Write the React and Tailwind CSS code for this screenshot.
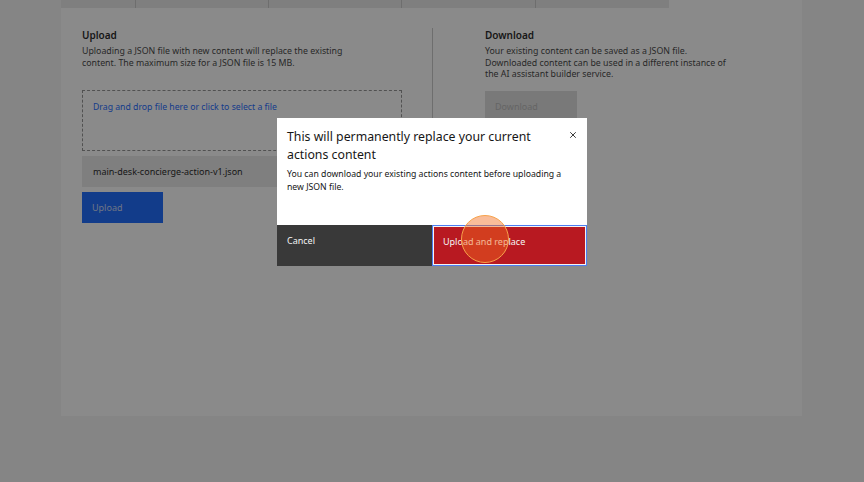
import { X } from 'lucide-react'

const tabs = [75, 133, 133, 134, 133]

export default function App() {
  return (
    <div className="relative h-[482px] w-[864px] overflow-hidden bg-[#f4f4f4] font-['Noto_Sans',sans-serif]">
      {/* page card */}
      <div className="ml-[61px] h-[416px] w-[741px] bg-white">
        <div className="flex h-[8px] w-[608px] bg-[#e8e8e8]">
          {tabs.map((w, i) => (
            <div key={i} style={{ width: w }} className={i < tabs.length - 1 ? 'h-full border-r border-[#c6c6c6]' : 'h-full'} />
          ))}
        </div>

        <div className="flex pl-[21px] pt-[20px]">
          {/* upload column */}
          <div className="w-[320px]">
            <h2 className="text-[10px] font-semibold leading-[14px] text-[#161616]">Upload</h2>
            <p className="mt-[4px] w-[280px] text-[8.8px] leading-[11.5px] text-[#393939]">
              Uploading a JSON file with new content will replace the existing content. The maximum size for a JSON file is 15 MB.
            </p>
            <div className="mt-[21px] h-[61px] border border-dashed border-[#8d8d8d] px-[10px] pt-[10px]">
              <p className="text-[8.7px] leading-[12px] text-[#0f62fe]">Drag and drop file here or click to select a file</p>
            </div>
            <div className="mt-[5px] flex h-[31px] items-center bg-[#e8e8e8] px-[11px]">
              <span className="text-[9px] text-[#161616]">main-desk-concierge-action-v1.json</span>
            </div>
            <button className="mt-[5px] flex h-[31px] w-[81px] items-center bg-[#0f62fe] px-[10px] text-[9px] text-[#c6d4f5]">
              Upload
            </button>
          </div>

          <div className="ml-[30px] h-[200px] w-px bg-[#c6c6c6]" />

          {/* download column */}
          <div className="ml-[52px] w-[260px]">
            <h2 className="text-[10px] font-semibold leading-[14px] text-[#161616]">Download</h2>
            <p className="mt-[4px] w-[245px] text-[8.8px] leading-[11.5px] text-[#393939]">
              Your existing content can be saved as a JSON file. Downloaded content can be used in a different instance of the AI assistant builder service.
            </p>
            <button className="mt-[10px] flex h-[32px] w-[92px] items-center bg-[#dcdcdc] px-[10px] text-[9px] text-[#b4b4b4]">
              Download
            </button>
          </div>
        </div>
      </div>

      {/* overlay */}
      <div className="absolute inset-0 flex justify-center bg-[#161616]/50 pt-[118px]">
        <div className="relative h-[148px] w-[310px] bg-white">
          <div className="flex h-[107px] flex-col px-[10px] pt-[10px]">
            <div className="flex items-start justify-between">
              <h3 className="w-[260px] text-[12.3px] leading-[18px] text-[#161616]">
                This will permanently replace your current actions content
              </h3>
              <X className="mr-[-1px] mt-[2px] h-[10px] w-[10px] text-[#161616]" strokeWidth={2} />
            </div>
            <p className="mt-[4px] w-[290px] text-[8.7px] leading-[13px] text-[#161616]">
              You can download your existing actions content before uploading a new JSON file.
            </p>
          </div>
          <div className="flex h-[41px]">
            <button className="flex w-[155px] items-start bg-[#393939] px-[10px] pt-[10px] text-[9px] leading-[12px] text-[#f4f4f4]">
              Cancel
            </button>
            <button className="flex flex-1 items-start border border-[#4c7ef3] bg-[#b81921] px-[10px] pt-[10px] text-[9px] leading-[12px] text-[#f4f4f4] shadow-[inset_0_0_0_1px_#f4f4f4]">
              Upload and replace
            </button>
          </div>
          {/* click indicator */}
          <div className="absolute left-[184px] top-[97px] h-[48px] w-[48px] rounded-full border-[1.5px] border-[#f7a24a] bg-[#f26a1c]/45" />
        </div>
      </div>
    </div>
  )
}
